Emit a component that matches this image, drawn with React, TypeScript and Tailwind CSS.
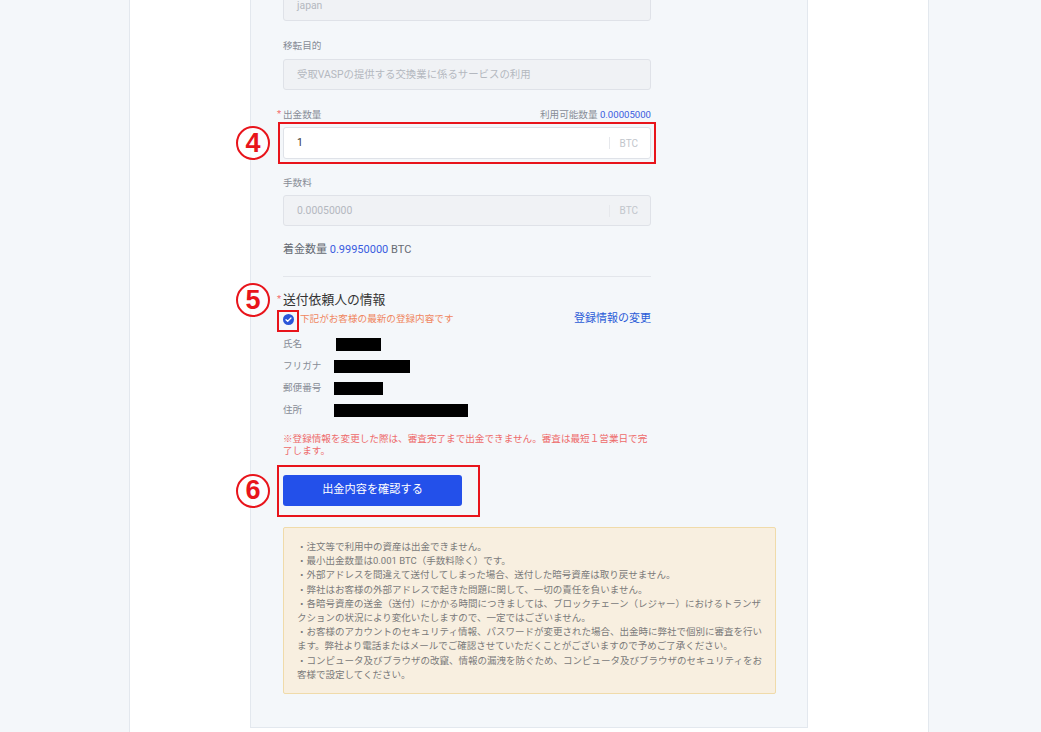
import React from "react";

const font = "font-['Roboto','Noto_Sans_CJK_JP',sans-serif]";

const Marker = ({ n }: { n: string }) => (
  <div className="absolute left-[-47px] top-1/2 -translate-y-1/2 w-[34px] h-[34px] rounded-full border-[2px] border-[#e8141b] bg-white/70 flex items-center justify-center">
    <span className="text-[27px] leading-none font-black text-[#e8141b] font-['Liberation_Sans',sans-serif]">
      {n}
    </span>
  </div>
);

const Label = ({
  children,
  required,
}: {
  children: React.ReactNode;
  required?: boolean;
}) => (
  <div className="relative text-[9.6px] leading-[14px] text-[#878c96]">
    {required && (
      <span className="absolute left-[-6px] top-[-1px] text-[#f56c6c]">*</span>
    )}
    {children}
  </div>
);

const Field = ({
  value,
  muted,
  white,
  suffix,
  h = "h-[31px]",
}: {
  value: string;
  muted?: boolean;
  white?: boolean;
  suffix?: boolean;
  h?: string;
}) => (
  <div
    className={`${h} w-full flex items-center rounded-[3px] border border-[#dfe2e8] ${
      white ? "bg-white" : "bg-[#f0f2f5]"
    }`}
  >
    <div
      className={`flex-1 pl-[13px] text-[10.4px] ${
        muted ? "text-[#b4b8bf]" : "text-[#333]"
      }`}
    >
      {value}
    </div>
    {suffix && (
      <div className="flex items-center pr-[12px]">
        <div className="w-px h-[12px] bg-[#e6e8ec]" />
        <span className="pl-[10px] text-[10px] text-[#c2c6cc]">BTC</span>
      </div>
    )}
  </div>
);

const InfoRow = ({ label, w, ml = "ml-0" }: { label: string; w: string; ml?: string }) => (
  <div className="h-[22px] flex items-center">
    <div className="w-[51px] text-[9.6px] text-[#878c96]">{label}</div>
    <div className={`${w} ${ml} h-[13px] bg-black`} />
  </div>
);

const notes: string[][] = [
  ["・注文等で利用中の資産は出金できません。"],
  ["・最小出金数量は0.001 BTC（手数料除く）です。"],
  ["・外部アドレスを間違えて送付してしまった場合、送付した暗号資産は取り戻せません。"],
  ["・弊社はお客様の外部アドレスで起きた問題に関して、一切の責任を負いません。"],
  [
    "・各暗号資産の送金（送付）にかかる時間につきましては、ブロックチェーン（レジャー）におけるトランザ",
    "クションの状況により変化いたしますので、一定ではございません。",
  ],
  [
    "・お客様のアカウントのセキュリティ情報、パスワードが変更された場合、出金時に弊社で個別に審査を行い",
    "ます。弊社より電話またはメールでご確認させていただくことがございますので予めご了承ください。",
  ],
  [
    "・コンピュータ及びブラウザの改竄、情報の漏洩を防ぐため、コンピュータ及びブラウザのセキュリティをお",
    "客様で設定してください。",
  ],
];

export default function App() {
  return (
    <div className={`h-[732px] w-[1041px] flex overflow-hidden bg-white ${font}`}>
      <div className="w-[130px] h-full bg-[#f4f7fa] border-r border-[#e3e8ee]" />
      <div className="w-[120px]" />

      <div className="w-[558px] self-start bg-[#f4f7fa] border-l border-r border-b border-[#e3e8ee] pl-[32px] pr-[30px] pb-[33px]">
        <div className="w-[368px] -mt-[10px] flex flex-col">
          <Field value="japan" muted />

          <div className="mt-[18px]">
            <Label>移転目的</Label>
          </div>
          <div className="mt-[6px]">
            <Field value="受取VASPの提供する交換業に係るサービスの利用" muted />
          </div>

          <div className="mt-[18px] flex items-center justify-between">
            <Label required>出金数量</Label>
            <div className="text-[9.6px] leading-[14px] text-[#878c96]">
              利用可能数量 <span className="text-[#3a5ce0]">0.00005000</span>
            </div>
          </div>
          <div className="mt-[5px] relative">
            <Field value="1" white suffix h="h-[32px]" />
            <div className="absolute -inset-[5px] border-2 border-[#e8141b]" />
            <Marker n="4" />
          </div>

          <div className="mt-[17px]">
            <Label>手数料</Label>
          </div>
          <div className="mt-[5px]">
            <Field value="0.00050000" muted suffix />
          </div>

          <div className="mt-[16px] text-[11px] leading-[16px] text-[#666b73]">
            着金数量 <span className="text-[#3a5ce0]">0.99950000</span> BTC
          </div>

          <div className="mt-[18px] h-px bg-[#e3e6eb]" />

          <div className="mt-[15px] relative text-[12.8px] leading-[16px] text-[#333]">
            <span className="absolute left-[-6px] top-[-1px] text-[9.6px] text-[#f56c6c]">*</span>
            送付依頼人の情報
            <Marker n="5" />
          </div>

          <div className="mt-[4px] h-[14px] flex items-center justify-between">
            <div className="flex items-center">
              <div className="relative w-[11px] h-[11px]">
                <svg viewBox="0 0 12 12" className="w-[11px] h-[11px]">
                  <circle cx="6" cy="6" r="6" fill="#2a55d8" />
                  <path d="M3.3 6.2l1.8 1.7 3.6-3.6" fill="none" stroke="#fff" strokeWidth="1.4" strokeLinecap="round" strokeLinejoin="round" />
                </svg>
                <div className="absolute left-[-6px] top-[-4px] w-[22px] h-[22px] border-2 border-[#e8141b]" />
              </div>
              <span className="ml-[6px] text-[9.6px] text-[#f08660]">
                下記がお客様の最新の登録内容です
              </span>
            </div>
            <span className="text-[11px] text-[#2a5bd7]">登録情報の変更</span>
          </div>

          <div className="mt-[7px] flex flex-col">
            <InfoRow label="氏名" w="w-[45px]" ml="ml-[2px]" />
            <InfoRow label="フリガナ" w="w-[76px]" />
            <InfoRow label="郵便番号" w="w-[49px]" />
            <InfoRow label="住所" w="w-[134px]" />
          </div>

          <div className="mt-[12px] text-[9.6px] leading-[12px] text-[#ee6b6b]">
            ※登録情報を変更した際は、審査完了まで出金できません。審査は最短１営業日で完
            <br />
            了します。
          </div>

          <div className="mt-[18px] relative w-[179px]">
            <button className="w-[179px] h-[31px] rounded-[3px] bg-[#2350ea] text-white text-[11.2px]">
              出金内容を確認する
            </button>
            <div className="absolute left-[-6px] top-[-10px] w-[203px] h-[52px] border-2 border-[#e8141b]" />
            <Marker n="6" />
          </div>
        </div>

        <div className="mt-[21px] w-[493px] h-[167px] bg-[#f8efe0] border border-[#f0dbaa] rounded-[2px] pl-[13px] pt-[12px]">
          {notes.map((lines, i) => (
            <div key={i} className="text-[9.5px] leading-[14.2px] text-[#7a7a7a] whitespace-nowrap">
              {lines.map((l, j) => (
                <div key={j}>{l}</div>
              ))}
            </div>
          ))}
        </div>
      </div>

      <div className="w-[120px]" />
      <div className="flex-1 h-full bg-[#f4f7fa] border-l border-[#e3e8ee]" />
    </div>
  );
}
